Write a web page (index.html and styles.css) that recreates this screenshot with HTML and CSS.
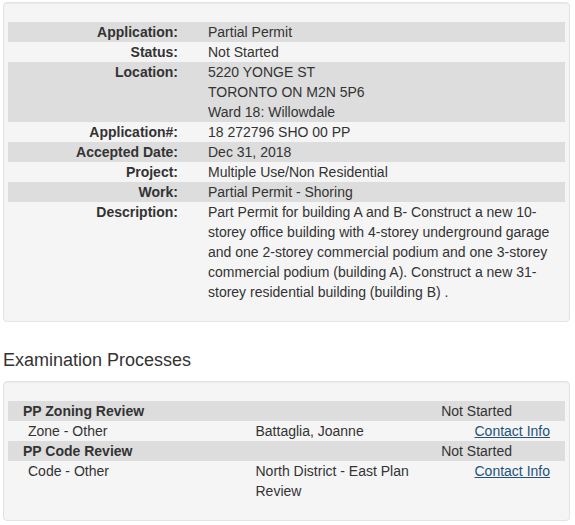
FILE: index.html
```html
<!DOCTYPE html>
<html lang="en">
<head>
    <meta charset="UTF-8">
    <title>Application Status</title>
    <link rel="stylesheet" href="styles.css">
</head>
<body>
    <div class="page">
        <div class="well">
            <table class="details">
                <tr class="stripe"><th>Application:</th><td>Partial Permit</td></tr>
                <tr><th>Status:</th><td>Not Started</td></tr>
                <tr class="stripe"><th>Location:</th><td>5220 YONGE ST<br>TORONTO ON M2N 5P6<br>Ward 18: Willowdale</td></tr>
                <tr><th>Application#:</th><td>18 272796 SHO 00 PP</td></tr>
                <tr class="stripe"><th>Accepted Date:</th><td>Dec 31, 2018</td></tr>
                <tr><th>Project:</th><td>Multiple Use/Non Residential</td></tr>
                <tr class="stripe"><th>Work:</th><td>Partial Permit - Shoring</td></tr>
                <tr><th>Description:</th><td>Part Permit for building A and B- Construct a new 10-storey office building with 4-storey underground garage and one 2-storey commercial podium and one 3-storey commercial podium (building A). Construct a new 31-storey residential building (building B) .</td></tr>
            </table>
        </div>

        <h3 class="section-title">Examination Processes</h3>

        <div class="well">
            <table class="processes">
                <tr class="stripe group">
                    <td colspan="2" class="group-name">PP Zoning Review</td>
                    <td class="status">Not Started</td>
                </tr>
                <tr>
                    <td class="task">Zone - Other</td>
                    <td class="examiner">Battaglia, Joanne</td>
                    <td class="contact"><a href="#">Contact Info</a></td>
                </tr>
                <tr class="stripe group">
                    <td colspan="2" class="group-name">PP Code Review</td>
                    <td class="status">Not Started</td>
                </tr>
                <tr>
                    <td class="task">Code - Other</td>
                    <td class="examiner">North District - East Plan Review</td>
                    <td class="contact"><a href="#">Contact Info</a></td>
                </tr>
            </table>
        </div>
    </div>
</body>
</html>
```

FILE: styles.css
```css
body {
    font-family: "Liberation Sans", Arial, sans-serif;
    font-size: 14px;
    line-height: 20px;
    color: #333;
    margin: 0;
    background: #fff;
}
.page {
    padding: 2px 5px 0 3px;
}
.well {
    background-color: #f5f5f5;
    border: 1px solid #e3e3e3;
    border-radius: 4px;
    box-shadow: inset 0 1px 1px rgba(0,0,0,0.05);
    padding: 19px 4px;
}
table {
    width: 100%;
    border-collapse: collapse;
}
th, td {
    padding: 0;
    vertical-align: top;
    text-align: left;
}
.stripe {
    background-color: #ddd;
}
.details th {
    width: 170px;
    text-align: right;
    font-weight: bold;
}
.details td {
    padding-left: 30px;
    padding-right: 12px;
}
.section-title {
    font-size: 18px;
    font-weight: normal;
    line-height: 20px;
    margin: 28px 0 11px;
}
.group-name {
    font-weight: bold;
    padding-left: 15px;
}
.task {
    width: 228px;
    padding-left: 20px;
}
.examiner {
    width: 186px;
}
.status {
    width: 124px;
}
.contact {
    text-align: right;
    padding-right: 15px;
}
.contact a {
    color: #23527c;
    text-decoration: underline;
}
```
